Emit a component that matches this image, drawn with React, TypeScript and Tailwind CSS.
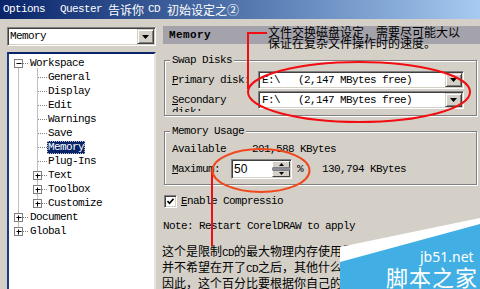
const MONO = "font-['Liberation_Mono','Noto_Sans_CJK_SC',monospace] text-[11px] tracking-[-0.6px]";
const CJK = "font-['Noto_Sans_CJK_SC',sans-serif] text-[12px] tracking-normal";
const SUNKEN =
  "border border-t-[#808080] border-l-[#808080] border-r-white border-b-white shadow-[inset_1px_1px_0_#404040,inset_-1px_-1px_0_#d4d0c8] p-[1px]";

const Arrow = () => (
  <svg width="7" height="4" viewBox="0 0 7 4">
    <path d="M0 0h7L3.5 4z" fill="#000" />
  </svg>
);

const DropButton = () => (
  <div className="flex h-full w-[17px] items-center justify-center bg-[#d4d0c8] border border-t-[#d4d0c8] border-l-[#d4d0c8] border-r-[#404040] border-b-[#404040] shadow-[inset_1px_1px_0_#fff,inset_-1px_-1px_0_#808080]">
    <Arrow />
  </div>
);

const Combo = ({ text }: { text: string }) => (
  <div className={`flex h-[18px] w-[206px] bg-white ${SUNKEN}`}>
    <div className={`flex-1 pl-[2px] leading-[14px] whitespace-pre ${MONO}`}>{text}</div>
    <DropButton />
  </div>
);

const tree = [
  { t: "Workspace", l: 0 },
  { t: "General", l: 1 },
  { t: "Display", l: 1 },
  { t: "Edit", l: 1 },
  { t: "Warnings", l: 1 },
  { t: "Save", l: 1 },
  { t: "Memory", l: 1, sel: true },
  { t: "Plug-Ins", l: 1 },
  { t: "Text", l: 1 },
  { t: "Toolbox", l: 1 },
  { t: "Customize", l: 1 },
  { t: "Document", l: 0 },
  { t: "Global", l: 0 },
];

const cy = (i: number) => 9.5 + 14 * i;

const TreeBox = ({ x, i, minus }: { x: number; i: number; minus?: boolean }) => (
  <g>
    <rect x={x - 4} y={cy(i) - 4} width="8" height="8" fill="#fff" stroke="#808080" />
    <line x1={x - 2} y1={cy(i)} x2={x + 3} y2={cy(i)} stroke="#000" />
    {!minus && <line x1={x} y1={cy(i) - 2} x2={x} y2={cy(i) + 3} stroke="#000" />}
  </g>
);

const TreeLines = () => (
  <svg className="absolute left-0 top-0" width="150" height="240">
    <g stroke="#808080" strokeDasharray="1 1">
      <line x1="9.5" y1={cy(0)} x2="9.5" y2={cy(12)} />
      <line x1="28.5" y1={cy(0) + 5} x2="28.5" y2={cy(10)} />
      {[0, 11, 12].map((i) => (
        <line key={i} x1="14" y1={cy(i)} x2="20" y2={cy(i)} />
      ))}
      {[1, 2, 3, 4, 5, 6, 7, 8, 9, 10].map((i) => (
        <line key={i} x1="29" y1={cy(i)} x2="38" y2={cy(i)} />
      ))}
    </g>
    <TreeBox x={9.5} i={0} minus />
    <TreeBox x={9.5} i={11} />
    <TreeBox x={9.5} i={12} />
    <TreeBox x={28.5} i={8} />
    <TreeBox x={28.5} i={9} />
    <TreeBox x={28.5} i={10} />
  </svg>
);

const Group = ({ title, className, children }: { title: string; className: string; children: React.ReactNode }) => (
  <div
    className={`relative ml-[1px] mr-[3px] border border-[#808080] shadow-[inset_1px_1px_0_#fff,1px_1px_0_#fff] pl-[7px] ${className}`}
  >
    <span className={`absolute left-[5px] top-[-7px] bg-[#d4d0c8] px-[2px] leading-[12px] ${MONO}`}>{title}</span>
    {children}
  </div>
);

export default function App() {
  return (
    <div className="relative flex h-[289px] w-[480px] flex-col overflow-hidden bg-[#d4d0c8] text-black">
      {/* title bar */}
      <div className="flex h-[19px] shrink-0 items-center bg-linear-to-r from-[#0a246a] to-[#a6caf0] pl-[3px] text-white">
        <span className={MONO}>Options</span>
        <span className={`ml-[15px] ${MONO}`}>Quester</span>
        <span className={`ml-[6px] ${CJK}`}>告诉你</span>
        <span className={`ml-[4px] ${MONO}`}>CD</span>
        <span className={`ml-[7px] ${CJK}`}>初始设定之②</span>
      </div>

      <div className="flex flex-1">
        {/* left: category tree */}
        <div className="w-[163px] shrink-0 pl-[7px] pt-[8px]">
          <div className={`flex h-[19px] w-[149px] bg-white ${SUNKEN}`}>
            <div className={`flex-1 pl-[1px] leading-[15px] ${MONO}`}>Memory</div>
            <DropButton />
          </div>
          <div className="relative mt-[6px] h-[240px] w-[149px] border-2 border-t-[#0a246a] border-l-[#1d3a8a] border-r-[#e6e4de] border-b-[#e6e4de] bg-white pt-[2px]">
            <TreeLines />
            {tree.map((r) => (
              <div key={r.t} className={`relative flex h-[14px] items-center ${r.l ? "pl-[38px]" : "pl-[20px]"}`}>
                <span
                  className={`px-[1px] leading-[13px] ${MONO} ${
                    r.sel ? "bg-[#0a246a] text-white outline-1 outline-dotted outline-[#c0c0c0] -outline-offset-1" : ""
                  }`}
                >
                  {r.t}
                </span>
              </div>
            ))}
          </div>
        </div>

        {/* right: settings page */}
        <div className="flex flex-1 flex-col pt-[7px]">
          <div className={`flex h-[18px] items-center bg-[#a4a2aa] pl-[6px] font-bold ${MONO} tracking-[0.4px]`}>Memory</div>

          <Group title="Swap Disks" className="mt-[16px] pt-[10px] pb-[6px]">
            <div className="flex h-[18px] items-center">
              <div className={`w-[86px] ${MONO}`}>
                <span className="underline">P</span>rimary disk:
              </div>
              <Combo text={"E:\\   (2,147 MBytes free)"} />
            </div>
            <div className="mt-[2px] flex h-[18px] items-start">
              <div className={`mt-[3px] h-[18px] w-[86px] overflow-hidden leading-[12px] ${MONO}`}>
                <span className="underline">S</span>econdary
                <br />
                disk:
              </div>
              <Combo text={"F:\\   (2,147 MBytes free)"} />
            </div>
          </Group>

          <Group title="Memory Usage" className="mt-[15px] pt-[11px] pb-[5px]">
            <div className={`flex h-[12px] items-center ${MONO}`}>
              <span className="w-[80px]">Available</span>
              <span>201,588 KBytes</span>
            </div>
            <div className={`mt-[4px] flex h-[20px] items-center ${MONO}`}>
              <span className="w-[59px]">
                <span className="underline">M</span>aximum:
              </span>
              <div className={`flex h-[20px] w-[61px] bg-white ${SUNKEN}`}>
                <div className="flex-1 pl-[1px] font-['Liberation_Sans',sans-serif] text-[12px] leading-[16px] tracking-normal">50</div>
                <div className="flex w-[18px] flex-col">
                  <div className="flex h-[7px] items-center justify-center border border-t-white border-l-white border-r-[#404040] border-b-[#808080] bg-[#d4d0c8]">
                    <svg width="5" height="3" viewBox="0 0 5 3">
                      <path d="M2.5 0L5 3H0z" fill="#000" />
                    </svg>
                  </div>
                  <div className="h-[2px] bg-[#8c8c98]" />
                  <div className="flex h-[7px] items-center justify-center border border-t-[#808080] border-l-white border-r-[#404040] border-b-[#404040] bg-[#d4d0c8]">
                    <svg width="5" height="3" viewBox="0 0 5 3">
                      <path d="M0 0h5L2.5 3z" fill="#000" />
                    </svg>
                  </div>
                </div>
              </div>
              <span className="ml-[5px]">%</span>
              <span className="ml-[19px]">130,794 KBytes</span>
            </div>
          </Group>

          <div className={`ml-[1px] mt-[10px] flex h-[13px] items-center ${MONO}`}>
            <div className={`flex h-[13px] w-[13px] items-center justify-center bg-white ${SUNKEN}`}>
              <svg width="7" height="7" viewBox="0 0 7 7">
                <path d="M0.5 3l2 2.2L6.5 0.8" stroke="#000" strokeWidth="1.6" fill="none" />
              </svg>
            </div>
            <span className="ml-[4px]">
              <span className="underline">E</span>nable Compressio
            </span>
          </div>

          <div className={`mt-[12px] h-[12px] leading-[12px] ${MONO}`}>Note: Restart CorelDRAW to apply</div>

          <div className={`-ml-[1px] mt-[12px] whitespace-nowrap leading-[13px] ${CJK}`}>
            <div>
              这个是限制<span className={MONO}>CD</span>的最大物理内存使用量，
            </div>
            <div>
              并不希望在开了<span className={MONO}>CD</span>之后，其他什么E程序都不能运行，
            </div>
            <div>因此，这个百分比要根据你自己的内存大小来设定。</div>
          </div>
        </div>
      </div>

      {/* annotation marks drawn over the screenshot */}
      <svg className="pointer-events-none absolute left-0 top-0" width="480" height="289">
        <g fill="none" stroke="#f20d12" strokeWidth="2">
          <path d="M267 33H248V89" />
          <ellipse cx="359" cy="92" rx="111" ry="30" />
          <path d="M212 170V246" />
        </g>
        <ellipse cx="261" cy="170.5" rx="48.5" ry="21.5" fill="none" stroke="#f0481c" strokeWidth="2" />
        <polygon points="340,247 480,218 480,289 340,289" fill="#fff" />
        <polygon points="340,262 480,224 480,289 340,289" fill="#41afe3" />
      </svg>

      <div className={`absolute left-[268px] top-[26px] leading-[11px] ${CJK}`}>
        文件交换磁盘设定，需要尽可能大以
        <br />
        保证在复杂文件操作时的速度。
      </div>

      <div className="absolute left-[420px] top-[250px] font-['Noto_Sans',sans-serif] text-[14px] leading-[14px] text-white">
        jb51.net
      </div>
      <div className="absolute left-[386px] top-[265px] font-['Noto_Sans_CJK_SC',sans-serif] text-[22px] leading-[22px] tracking-[1px] text-white">
        脚本之家
      </div>
    </div>
  );
}
